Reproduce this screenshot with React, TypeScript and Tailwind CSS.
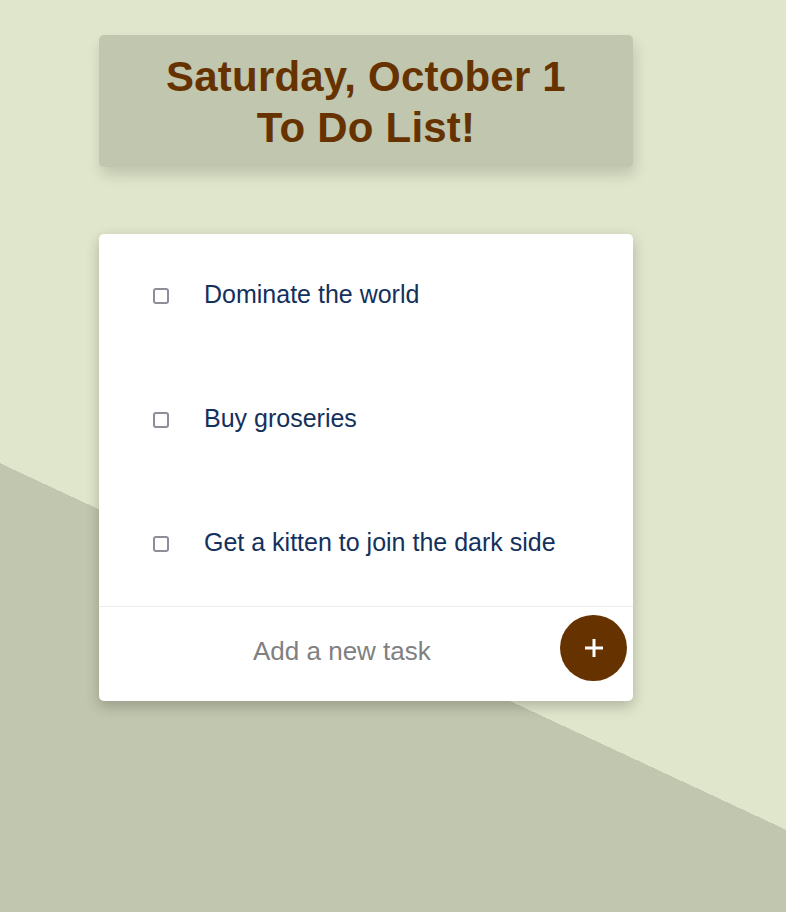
const tasks = ['Dominate the world', 'Buy groseries', 'Get a kitten to join the dark side'];

const App = () => {
  return (
    <div
      className="min-h-screen w-full bg-[linear-gradient(205deg,#dfe6cb_752px,#c1c6ae_752px)] pt-[35px] pl-[99px] font-['Liberation_Sans',Arial,sans-serif]"
    >
      <div className="w-[534px] h-[132px] rounded-[5px] bg-[#c1c6ae] shadow-[2px_8px_14px_rgba(0,0,0,0.14)] flex flex-col items-center justify-center">
        <h1 className="text-[42px] leading-[51px] font-bold text-[#663300] text-center tracking-[0.2px] mt-[2px]">
          Saturday, October 1
          <br />
          To Do List!
        </h1>
      </div>

      <div className="mt-[67px] w-[534px] rounded-[5px] bg-white shadow-[0_5px_14px_rgba(0,0,0,0.22)]">
        <ul>
          {tasks.map(task => (
            <li key={task} className="h-[124px] flex items-center">
              <input
                type="checkbox"
                className="appearance-none ml-[54px] w-4 h-4 border-2 border-[#8f8d9a] rounded-[3px] bg-white shrink-0"
              />
              <span className="ml-[35px] mt-[-3px] text-[25px] text-[#14305c]">{task}</span>
            </li>
          ))}
        </ul>
        <div className="h-px bg-[#ececec]" />
        <div className="h-[94px] flex items-start">
          <input
            type="text"
            placeholder="Add a new task"
            className="self-center min-w-0 flex-1 pl-[154px] text-[26px] text-[#333] placeholder:text-[#808080] outline-none bg-transparent mt-[-6px]"
          />
          <button
            title="add"
            className="shrink-0 mt-[8px] mr-[6px] w-[67px] h-[66px] rounded-full bg-[#663300] flex items-center justify-center"
          >
            <svg width="22" height="22" viewBox="0 0 22 22">
              <path d="M11 2v18M2 11h18" stroke="white" strokeWidth="3" />
            </svg>
          </button>
        </div>
      </div>
    </div>
  );
};

export default App;
